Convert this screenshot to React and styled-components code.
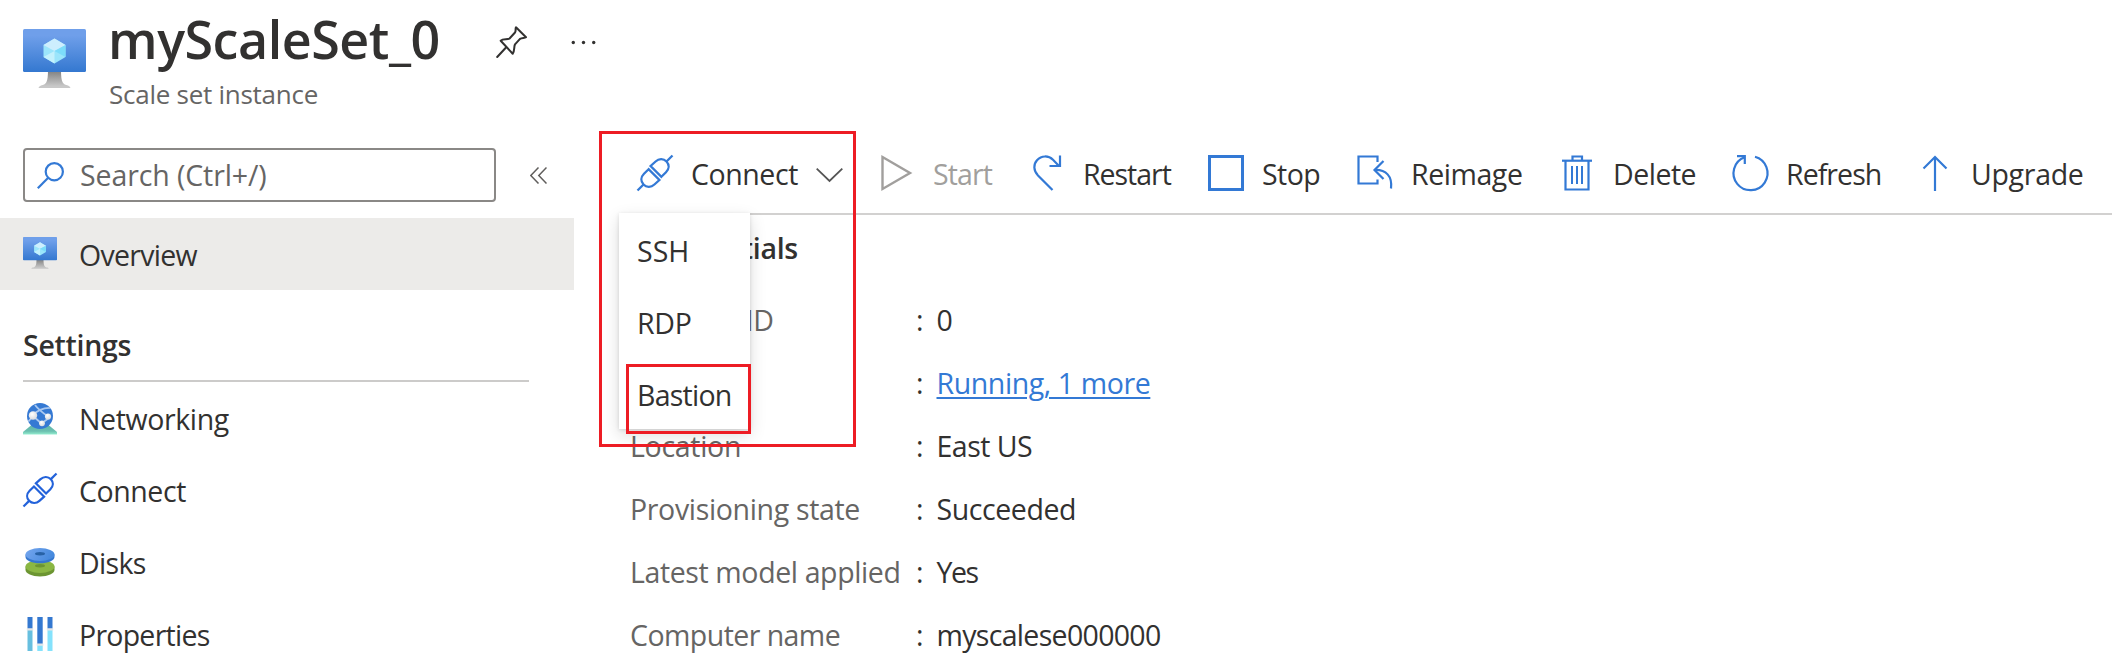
import React from "react";
import styled, { createGlobalStyle } from "styled-components";

const BLUE = "#3379d5";
const INK = "#323130";
const MUTED = "#666564";

const GlobalStyle = createGlobalStyle`
  * { box-sizing: border-box; }
  body {
    margin: 0;
    background: #fff;
    color: ${INK};
    font-family: "Open Sans", "Noto Sans", sans-serif;
    font-size: 28.5px;
    line-height: 40px;
    overflow: hidden;
  }
`;

const Page = styled.div`
  position: relative;
  width: 2112px;
  height: 664px;
  overflow: hidden;
  display: flex;
  flex-direction: column;
`;

const Header = styled.header`
  display: flex;
  height: 130px;
  padding-left: 23px;
  flex: none;
`;

const HeaderIcon = styled.div`
  width: 85px;
  padding-top: 29px;
  svg { display: block; }
`;

const TitleBlock = styled.div`
  display: flex;
  flex-direction: column;
  width: 388px;
`;

const Title = styled.h1`
  margin: 3px 0 0;
  font-size: 52px;
  font-weight: 600;
  line-height: 71px;
  letter-spacing: -0.47px;
`;

const Subtitle = styled.div`
  padding-left: 1px;
  font-size: 26px;
  color: ${MUTED};
  letter-spacing: -0.26px;
`;

const HeaderActions = styled.div`
  display: flex;
  align-items: flex-start;
  gap: 43px;
  padding-top: 26px;
  svg { display: block; }
`;

const Body = styled.div`
  display: flex;
  flex: 1;
  min-height: 0;
`;

const Sidebar = styled.aside`
  width: 574px;
  flex: none;
  display: flex;
  flex-direction: column;
`;

const SearchRow = styled.div`
  display: flex;
  align-items: center;
  flex: none;
  height: 54px;
  margin-top: 18px;
  padding-left: 23px;
  gap: 34px;
`;

const SearchBox = styled.div`
  display: flex;
  align-items: center;
  width: 473px;
  height: 54px;
  padding: 0 12px;
  gap: 16px;
  border: 2px solid #8a8886;
  border-radius: 4px;
  color: ${MUTED};
  letter-spacing: -0.1px;
`;

const NavItem = styled.div`
  display: flex;
  align-items: center;
  flex: none;
  height: 72px;
  padding-left: 23px;
  gap: 22px;
  background: ${(p) => (p.$active ? "#ecebe9" : "transparent")};
  letter-spacing: ${(p) => p.$track || 0}px;
  svg { flex: none; display: block; overflow: visible; }
  span { padding-top: 2px; }
`;

const NavTop = styled.div`
  margin-top: 16px;
  flex: none;
`;

const SectionTitle = styled.h2`
  flex: none;
  margin: 0 45px 0 23px;
  height: 92px;
  padding-top: 35px;
  border-bottom: 2px solid #cccbca;
  font-size: 28.5px;
  line-height: 40px;
  font-weight: 600;
  letter-spacing: -0.28px;
`;

const Main = styled.main`
  flex: 1;
  min-width: 0;
  padding-left: 56px;
`;

const Toolbar = styled.div`
  display: flex;
  height: 85px;
  padding-left: 7px;
  border-bottom: 2px solid #d2d1d0;
`;

const ToolButton = styled.div`
  position: relative;
  display: flex;
  align-items: center;
  flex: none;
  width: ${(p) => p.$width}px;
  height: 86px;
  gap: 18px;
  color: ${(p) => (p.$disabled ? "#a19f9d" : INK)};
  letter-spacing: ${(p) => p.$track || 0}px;
  white-space: nowrap;
  > svg { flex: none; display: block; overflow: visible; }
  > span { padding-top: 2px; }
`;

const Menu = styled.div`
  position: absolute;
  left: -18px;
  top: 83px;
  width: 131px;
  height: 216px;
  z-index: 2;
  background: #fff;
  box-shadow: 0 6px 16px rgba(0, 0, 0, 0.14), 0 1px 4px rgba(0, 0, 0, 0.12);
`;

const MenuItem = styled.div`
  height: 72px;
  line-height: 76px;
  padding-left: 18px;
  letter-spacing: ${(p) => p.$track}px;
`;

const EssentialsTitle = styled.h3`
  margin: 0;
  padding: 13px 0 0 35px;
  height: 73px;
  font-size: 28.5px;
  line-height: 40px;
  font-weight: 600;
  letter-spacing: -0.28px;
`;

const Details = styled.div`
  display: grid;
  grid-template-columns: 286px 20.5px auto;
  grid-auto-rows: 63px;
  align-items: center;
`;

const Label = styled.div`
  color: ${MUTED};
  letter-spacing: ${(p) => p.$track || 0}px;
`;

const Value = styled.div`
  letter-spacing: ${(p) => p.$track || 0}px;
`;

const Link = styled.span`
  color: ${BLUE};
  text-decoration: underline;
  text-decoration-thickness: 2px;
  text-underline-offset: 3px;
`;

const Highlight = styled.div`
  position: absolute;
  z-index: 3;
  left: ${(p) => p.$x}px;
  top: ${(p) => p.$y}px;
  width: ${(p) => p.$w}px;
  height: ${(p) => p.$h}px;
  border: 3px solid #ed1c24;
`;

function VmIcon({ size, id }) {
  return (
    <svg width={size} height={size} viewBox="0 0 63 63" fill="none">
      <defs>
        <linearGradient id={id + "s"} x1="0" y1="0" x2="0" y2="1">
          <stop offset="0.15" stopColor="#6f9fea" />
          <stop offset="1" stopColor="#3478d0" />
        </linearGradient>
        <linearGradient id={id + "f"} x1="0" y1="0" x2="0" y2="1">
          <stop offset="0" stopColor="#7d7d7d" />
          <stop offset="0.9" stopColor="#c8c8c8" />
        </linearGradient>
      </defs>
      <path d="M25 41H38C38 54 40 55.500 45 56.500Q47.500 57.500 47.500 59H15.500Q15.500 57.500 18 56.500C23 55.500 25 54 25 41Z" fill={`url(#${id}f)`} />
      <rect x="0" y="0" width="63" height="43" rx="1.500" fill={`url(#${id}s)`} />
      <path d="M31.500 9.500L42.500 16V28L31.500 34.500L20.500 28V16Z" fill="#9be5fb" />
      <path d="M31.500 9.500L42.500 16L31.500 22L20.500 16Z" fill="#cdeefe" />
      <path d="M42.500 16V28L31.500 22Z" fill="#7cdcfa" />
      <path d="M20.500 28L31.500 22V34.500Z" fill="#c3f1fd" />
    </svg>
  );
}

function PlugIcon({ size = 36, color = BLUE }) {
  const half = "M11.600 14.200L7 18.800C3.600 22.200 3.600 26.400 6.500 29.500C9.600 32.700 14.200 32.400 17.400 29.500L22.400 25Z";
  return (
    <svg width={size} height={size} viewBox="0 0 36 36" fill="none" stroke={color} strokeWidth="2.300">
      <path d={half} />
      <path d="M0.500 35.500L6.500 29.500" />
      <g transform="rotate(180 18 18)">
        <path d={half} />
        <path d="M0.500 35.500L6.500 29.500" />
      </g>
    </svg>
  );
}

const Tool = ({ children }) => (
  <svg width="36" height="36" viewBox="0 0 36 36" fill="none" stroke={BLUE} strokeWidth="2.200">
    {children}
  </svg>
);

const PlayIcon = () => (
  <Tool>
    <path d="M3.500 2L31 18L3.500 34Z" stroke="#a19f9d" strokeWidth="2.400" />
  </Tool>
);

const RestartIcon = () => (
  <Tool>
    <path d="M23.500 35L9 20.500C4.300 15.500 4.300 9.300 8 5.200C12.500 0.300 19.500 0.300 24 4.800L30 11" />
    <path d="M31 0.500V11H20.500" />
  </Tool>
);

const StopIcon = () => (
  <Tool>
    <rect x="1.500" y="1.500" width="33" height="33" strokeWidth="3" />
  </Tool>
);

const ReimageIcon = () => (
  <Tool>
    <path d="M20.500 7V1.500H1.500V28.500H20.500V24.500" />
    <path d="M26.500 6L17.500 15L26.500 24" />
    <path d="M17.500 15C29 14.500 35.500 21 34 33.500" />
  </Tool>
);

const TrashIcon = () => (
  <Tool>
    <path d="M3 5.700H33" />
    <path d="M13.500 5V1.500H23V5" />
    <path d="M6.500 6V34.500H29.500V6" />
    <path d="M13 11V29M18 11V29M23 11V29" strokeWidth="2" />
  </Tool>
);

const RefreshIcon = () => (
  <Tool>
    <path d="M23 1.800A17 17 0 1 1 12.500 2.300" />
    <path d="M5 1.200H12.800V9" />
  </Tool>
);

const UpIcon = () => (
  <Tool>
    <path d="M18 36V2" />
    <path d="M6.500 13.500L18 2L29.500 13.500" />
  </Tool>
);

const ChevronDown = () => (
  <svg width="27" height="18" viewBox="0 0 27 18" fill="none" stroke="#555" strokeWidth="1.800">
    <path d="M0.700 4.700L13.500 17L26.300 4.700" />
  </svg>
);

const PinIcon = () => (
  <svg width="32" height="33" viewBox="0 0 32 33" fill="none" stroke={INK} strokeWidth="2" strokeLinejoin="round" strokeLinecap="round">
    <path d="M20 1.300L30 11.200C28.500 12.300 26 11.500 24 12.800L19 18.300C17.700 21 18.800 25.500 16.700 27.700L4.700 14.800C7 12.500 11 14 13.300 12.700L19 6.500C20.300 4.500 19 3 20 1.300Z" />
    <path d="M10 21.500L1.200 31" />
  </svg>
);

const MoreIcon = () => (
  <svg width="26" height="33" viewBox="0 0 26 33" fill={INK}>
    <circle cx="2.300" cy="16.500" r="1.700" />
    <circle cx="12.500" cy="16.500" r="1.700" />
    <circle cx="22.700" cy="16.500" r="1.700" />
  </svg>
);

const SearchIcon = () => (
  <svg width="27" height="27" viewBox="0 0 27 27" fill="none" stroke={BLUE} strokeWidth="2.200">
    <circle cx="17.300" cy="9.700" r="8.600" />
    <path d="M11.200 15.800L0.800 26.200" />
  </svg>
);

const CollapseIcon = () => (
  <svg width="17" height="17" viewBox="0 0 17 17" fill="none" stroke="#605e5c" strokeWidth="1.500">
    <path d="M8.500 0.500L0.800 8.500L8.500 16.500M16.500 0.500L8.800 8.500L16.500 16.500" />
  </svg>
);

const NetworkIcon = () => (
  <svg width="34" height="34" viewBox="0 0 34 34" fill="none">
    <defs>
      <linearGradient id="netBase" x1="0" y1="0" x2="0" y2="1">
        <stop offset="0" stopColor="#5fb5ab" />
        <stop offset="0.65" stopColor="#6cc0b0" />
        <stop offset="1" stopColor="#94eed0" />
      </linearGradient>
      <radialGradient id="netBall" cx="0.4" cy="0.35" r="0.7">
        <stop offset="0" stopColor="#fff" />
        <stop offset="1" stopColor="#d5d8dc" />
      </radialGradient>
      <clipPath id="netClip"><circle cx="17" cy="15" r="13" /></clipPath>
    </defs>
    <path d="M8.500 24H25.500L34 31V33.500H0V31Z" fill="url(#netBase)" />
    <circle cx="17" cy="15" r="13" fill="#3579d3" />
    <g clipPath="url(#netClip)" stroke="#a9c8f0" strokeWidth="1.800">
      <path d="M10 14.500C13 10 20 6.500 28 7M12 4C15 8 20 12 25 15.500M10 15L18.500 22.500M19 22L26 17M5 21L10 15" />
    </g>
    <circle cx="10" cy="14.500" r="4.200" fill="url(#netBall)" />
    <circle cx="25" cy="15.500" r="3.100" fill="url(#netBall)" />
    <circle cx="19" cy="22.300" r="2.900" fill="url(#netBall)" />
  </svg>
);

const DisksIcon = () => (
  <svg width="34" height="34" viewBox="0 0 34 34" fill="none">
    <defs>
      <linearGradient id="diskTop" x1="0" y1="0" x2="1" y2="0.3">
        <stop offset="0" stopColor="#75a6ee" />
        <stop offset="1" stopColor="#478ade" />
      </linearGradient>
    </defs>
    <path d="M2.500 21.500V25C2.500 28.500 9 31.500 17 31.500S31.500 28.500 31.500 25V21.500Z" fill="#6c9532" />
    <ellipse cx="17" cy="21.500" rx="14.500" ry="6.500" fill="#8bb743" />
    <ellipse cx="17" cy="20.800" rx="5" ry="1.700" fill="#6c9532" />
    <path d="M2.500 9.500V12C2.500 15.500 9 18.300 17 18.300S31.500 15.500 31.500 12V9.500Z" fill="#3577cf" />
    <ellipse cx="17" cy="9.500" rx="14.500" ry="6.400" fill="url(#diskTop)" />
    <ellipse cx="17" cy="8.700" rx="5" ry="1.700" fill="#2862a6" />
  </svg>
);

const PropertiesIcon = () => (
  <svg width="34" height="34" viewBox="0 0 34 34" fill="none">
    <path d="M4.500 0H9.500V12H4.500ZM14.300 0H19.700V27H14.300ZM24.500 0H29.500V12H24.500Z" fill="#3478d0" />
    <path d="M4.500 13H9.500V34H4.500Z" fill="#67bfdf" />
    <path d="M14.300 28H19.700V34H14.300ZM24.500 13H29.500V34H24.500Z" fill="#84e2fc" />
    <path d="M3.800 11.300H10.200V13.500H3.800ZM13.700 26.500H20.300V28.700H13.700ZM23.800 11.300H30.200V13.500H23.800Z" fill="#e3e6e8" />
  </svg>
);

const NAV = [
  { text: "Networking", icon: <NetworkIcon />, track: -0.38 },
  { text: "Connect", icon: <PlugIcon size={34} color="#2362da" />, track: -0.42 },
  { text: "Disks", icon: <DisksIcon />, track: -0.69 },
  { text: "Properties", icon: <PropertiesIcon />, track: -0.75 },
];

const TOOLS = [
  { text: "Start", icon: <PlayIcon />, width: 150, track: -0.9, disabled: true },
  { text: "Restart", icon: <RestartIcon />, width: 179, track: -1.03 },
  { text: "Stop", icon: <StopIcon />, width: 149, track: -0.55 },
  { text: "Reimage", icon: <ReimageIcon />, width: 202, track: -0.43 },
  { text: "Delete", icon: <TrashIcon />, width: 173, track: -0.5 },
  { text: "Refresh", icon: <RefreshIcon />, width: 185, track: -0.94 },
  { text: "Upgrade", icon: <UpIcon />, width: 190, track: -0.3 },
];

const DETAILS = [
  { id: "id", label: "Instance ID", labelTrack: -0.42, value: "0" },
  { id: "status", label: "", value: <Link>Running, 1 more</Link>, track: -0.4 },
  { id: "location", label: "Location", labelTrack: -0.3, value: "East US", track: -0.5 },
  { id: "state", label: "Provisioning state", labelTrack: -0.34, value: "Succeeded", track: -0.42 },
  { id: "model", label: "Latest model applied", labelTrack: -0.38, value: "Yes", track: -1.5 },
  { id: "name", label: "Computer name", labelTrack: -0.55, value: "myscalese000000", track: -0.68 },
];

export default function App() {
  return (
    <Page>
      <GlobalStyle />
      <Header>
        <HeaderIcon><VmIcon size={63} id="vmLarge" /></HeaderIcon>
        <TitleBlock>
          <Title>myScaleSet_0</Title>
          <Subtitle>Scale set instance</Subtitle>
        </TitleBlock>
        <HeaderActions>
          <PinIcon />
          <MoreIcon />
        </HeaderActions>
      </Header>
      <Body>
        <Sidebar>
          <SearchRow>
            <SearchBox>
              <SearchIcon />
              <span>Search (Ctrl+/)</span>
            </SearchBox>
            <CollapseIcon />
          </SearchRow>
          <NavTop>
            <NavItem $active $track={-0.7}>
              <VmIcon size={34} id="vmSmall" />
              <span>Overview</span>
            </NavItem>
          </NavTop>
          <SectionTitle>Settings</SectionTitle>
          {NAV.map((n) => (
            <NavItem key={n.text} $track={n.track}>
              {n.icon}
              <span>{n.text}</span>
            </NavItem>
          ))}
        </Sidebar>
        <Main>
          <Toolbar>
            <ToolButton $width={242} $track={-0.42}>
              <PlugIcon />
              <span>Connect</span>
              <ChevronDown />
              <Menu>
                <MenuItem $track={0}>SSH</MenuItem>
                <MenuItem $track={-0.27}>RDP</MenuItem>
                <MenuItem $track={-0.75}>Bastion</MenuItem>
              </Menu>
            </ToolButton>
            {TOOLS.map((t) => (
              <ToolButton key={t.text} $width={t.width} $track={t.track} $disabled={t.disabled}>
                {t.icon}
                <span>{t.text}</span>
              </ToolButton>
            ))}
          </Toolbar>
          <EssentialsTitle>Essentials</EssentialsTitle>
          <Details>
            {DETAILS.map((d) => (
              <React.Fragment key={d.id}>
                <Label $track={d.labelTrack}>{d.label}</Label>
                <span>:</span>
                <Value $track={d.track}>{d.value}</Value>
              </React.Fragment>
            ))}
          </Details>
        </Main>
      </Body>
      <Highlight $x={599} $y={131} $w={257} $h={316} />
      <Highlight $x={626} $y={364} $w={125} $h={70} />
    </Page>
  );
}
